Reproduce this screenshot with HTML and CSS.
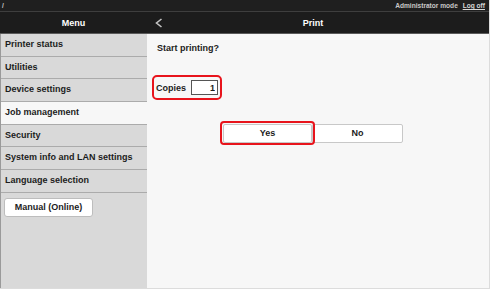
FILE: index.html
```html
<!DOCTYPE html>
<html lang="en">
<head>
    <meta charset="UTF-8">
    <title>Print</title>
    <link rel="stylesheet" href="styles.css">
</head>
<body>

    <div class="page">
        <!-- top strip -->
        <div class="topbar">
            <span class="path">/</span>
            <span class="admin">Administrator mode <a href="#" class="logoff">Log off</a></span>
        </div>

        <div class="header">
            <div class="menu-title">Menu</div>
            <div class="print-title">
                <svg class="back" width="8" height="10" viewBox="0 0 8 10">
                    <polyline points="6.5,1 1.5,5 6.5,9" fill="none" stroke="#c4c4c4" stroke-width="1.6"/>
                </svg>
                <span>Print</span>
            </div>
        </div>

        <div class="main">
            <div class="sidebar">
                <div class="item">Printer status</div>
                <div class="item">Utilities</div>
                <div class="item">Device settings</div>
                <div class="item active">Job management</div>
                <div class="item">Security</div>
                <div class="item">System info and LAN settings</div>
                <div class="item">Language selection</div>
                <button class="manual">Manual (Online)</button>
            </div>

            <div class="content">
                <p class="question">Start printing?</p>

                <div class="copies">
                    <label for="copies">Copies</label>
                    <input type="text" id="copies" value="1">
                </div>

                <div class="answers">
                    <div class="mark"><button class="btn">Yes</button></div>
                    <button class="btn btn-no">No</button>
                </div>
            </div>
        </div>
    </div>

</body>
</html>
```

FILE: styles.css
```css
body {
    margin: 0;
    font-family: "Liberation Sans", Arial, sans-serif;
    background: #f7f7f7;
}

.page {
    width: 490px;
    height: 289px;
    display: flex;
    flex-direction: column;
    box-sizing: border-box;
    border-right: 1px solid #dcdcdc;
    border-bottom: 1px solid #dcdcdc;
}

.topbar {
    height: 11px;
    background-color: #1f1f1f;
    border-bottom: 1px solid #3e3e3e;
    color: #c8c8c8;
    font-size: 6.6px;
    font-weight: bold;
    display: flex;
    justify-content: space-between;
    align-items: center;
    padding: 0 4px 0 2px;
}

.logoff {
    color: #d8d8d8;
    margin-left: 3px;
    text-decoration: underline;
}

.header {
    height: 21px;
    background-color: #1c1c1c;
    border-bottom: 1px solid #5a5a5a;
    display: flex;
    color: white;
    font-size: 9px;
    font-weight: bold;
}

.menu-title {
    width: 147px;
    display: flex;
    align-items: center;
    justify-content: center;
}

.print-title {
    flex: 1;
    display: flex;
    align-items: center;
    justify-content: center;
    position: relative;
    padding-right: 10px;
}

/* back arrow sits over the title bar */
.back {
    position: absolute;
    left: 8px;
    top: 6px;
}

.main {
    flex: 1;
    display: flex;
}

.sidebar {
    width: 146px;
    background-color: #d9d9d9;
    border-left: 1px solid #9a9a9a;
    font-size: 9px;
    font-weight: bold;
    color: #1c1c1c;
}

.item {
    height: 21.7px;
    line-height: 21.7px;
    padding-left: 4px;
    border-bottom: 1px solid #ababab;
}

.item.active {
    background-color: #f7f7f7;
}

.manual {
    display: block;
    margin: 5px 0 0 3px;
    width: 89px;
    height: 19px;
    background: white;
    border: 1px solid #bdbdbd;
    border-radius: 3px;
    font-family: inherit;
    font-size: 9px;
    font-weight: bold;
    color: #1c1c1c;
}

.content {
    flex: 1;
    background-color: #f7f7f7;
    padding-left: 5px;
    font-size: 9px;
    font-weight: bold;
    color: #1c1c1c;
}

.question {
    margin: 9px 0 0 5px;
    line-height: 11px;
}

.copies {
    display: inline-flex;
    align-items: center;
    margin-top: 21px;
    height: 25px;
    box-sizing: border-box;
    border: 2px solid #e8141c;
    border-radius: 5px;
    padding: 0 2px;
}

.copies label {
    margin-right: 5px;
}

.copies input {
    width: 27px;
    height: 15px;
    box-sizing: border-box;
    border: 1px solid #555;
    padding: 0 2px;
    text-align: right;
    font-family: inherit;
    font-size: 9px;
    font-weight: bold;
    color: #1c1c1c;
    background: white;
}

.answers {
    display: flex;
    align-items: center;
    margin: 21px 0 0 68px;
}

.mark {
    position: relative;
    z-index: 1;
    border: 2px solid #e8141c;
    border-radius: 4px;
    padding: 0 1px;
    height: 20px;
    display: flex;
    align-items: center;
}

.btn {
    width: 89px;
    height: 19px;
    background: white;
    border: 1px solid #c8c8c8;
    border-radius: 2px;
    font-family: inherit;
    font-size: 9px;
    font-weight: bold;
    color: #1c1c1c;
}

.btn-no {
    width: 91px;
    margin-left: -3px;
}
```
